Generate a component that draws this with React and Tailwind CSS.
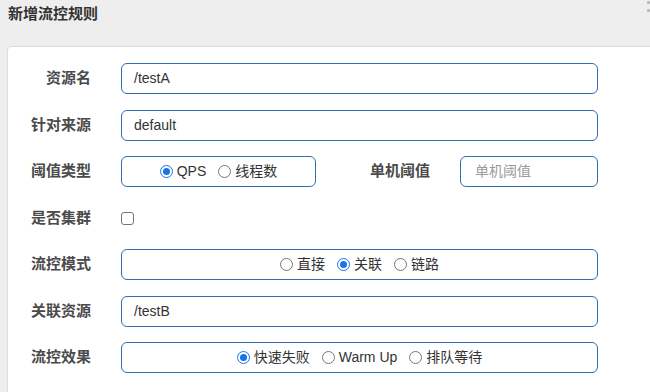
import React from "react";

const cjk = { fontFamily: '"Liberation Sans", "Noto Sans CJK SC", sans-serif' };

const Radio = ({ checked, label }) => (
  <span className="flex items-center gap-[4px]">
    {checked ? (
      <span className="flex h-[13px] w-[13px] items-center justify-center rounded-full border-[1.5px] border-[#1a73e8] bg-white">
        <span className="h-[7px] w-[7px] rounded-full bg-[#1a73e8]" />
      </span>
    ) : (
      <span className="h-[13px] w-[13px] rounded-full border border-[#767676] bg-white" />
    )}
    <span className="text-[14px] text-[#333]">{label}</span>
  </span>
);

const Label = ({ children, className = "w-[83px]" }) => (
  <div className={`${className} shrink-0 text-right text-[15px] font-bold text-[#4a4a4a]`}>
    {children}
  </div>
);

const Box = ({ children, className = "w-[477px]" }) => (
  <div
    className={`${className} flex h-[31px] shrink-0 items-center rounded-[6px] border border-[#2f6db0] bg-white`}
  >
    {children}
  </div>
);

export default function App() {
  return (
    <div
      className="relative h-[392px] w-[650px] overflow-hidden bg-[#eeeeee]"
      style={cjk}
    >
      <div className="flex h-[46px] items-start pl-[8px] pt-[3px]">
        <span className="text-[15px] font-bold text-[#333]">新增流控规则</span>
      </div>
      {/* close button, mostly cut off by the window edge */}
      <div className="absolute left-[647px] top-[1px] h-[3px] w-[3px] rounded-full bg-[#b0b0b0]" />
      <div className="absolute left-[647px] top-[9px] h-[3px] w-[3px] rounded-full bg-[#b0b0b0]" />

      <div className="ml-[7px] h-[400px] w-[700px] rounded-[4px] border border-[#dcdcdc] bg-white pt-[16px]">
        <div className="flex flex-col gap-[15.5px]">
          <div className="flex h-[31px] items-center gap-[30px]">
            <Label>资源名</Label>
            <Box>
              <span className="pl-[12px] text-[14px] text-[#333]">/testA</span>
            </Box>
          </div>

          <div className="flex h-[31px] items-center gap-[30px]">
            <Label>针对来源</Label>
            <Box>
              <span className="pl-[12px] text-[14px] text-[#333]">default</span>
            </Box>
          </div>

          <div className="flex h-[31px] items-center gap-[30px]">
            <Label>阈值类型</Label>
            <Box className="w-[195px] justify-center gap-[12px]">
              <Radio checked label="QPS" />
              <Radio label="线程数" />
            </Box>
            <Label className="w-[84px]">单机阈值</Label>
            <Box className="w-[138px]">
              <span className="pl-[14px] text-[14px] text-[#9a9a9a]">单机阈值</span>
            </Box>
          </div>

          <div className="flex h-[31px] items-center gap-[30px]">
            <Label>是否集群</Label>
            <span className="h-[13px] w-[13px] rounded-[3px] border border-[#767676] bg-white" />
          </div>

          <div className="flex h-[31px] items-center gap-[30px]">
            <Label>流控模式</Label>
            <Box className="w-[477px] justify-center gap-[12px]">
              <Radio label="直接" />
              <Radio checked label="关联" />
              <Radio label="链路" />
            </Box>
          </div>

          <div className="flex h-[31px] items-center gap-[30px]">
            <Label>关联资源</Label>
            <Box>
              <span className="pl-[12px] text-[14px] text-[#333]">/testB</span>
            </Box>
          </div>

          <div className="flex h-[31px] items-center gap-[30px]">
            <Label>流控效果</Label>
            <Box className="w-[477px] justify-center gap-[12px]">
              <Radio checked label="快速失败" />
              <Radio label="Warm Up" />
              <Radio label="排队等待" />
            </Box>
          </div>
        </div>
      </div>
    </div>
  );
}
